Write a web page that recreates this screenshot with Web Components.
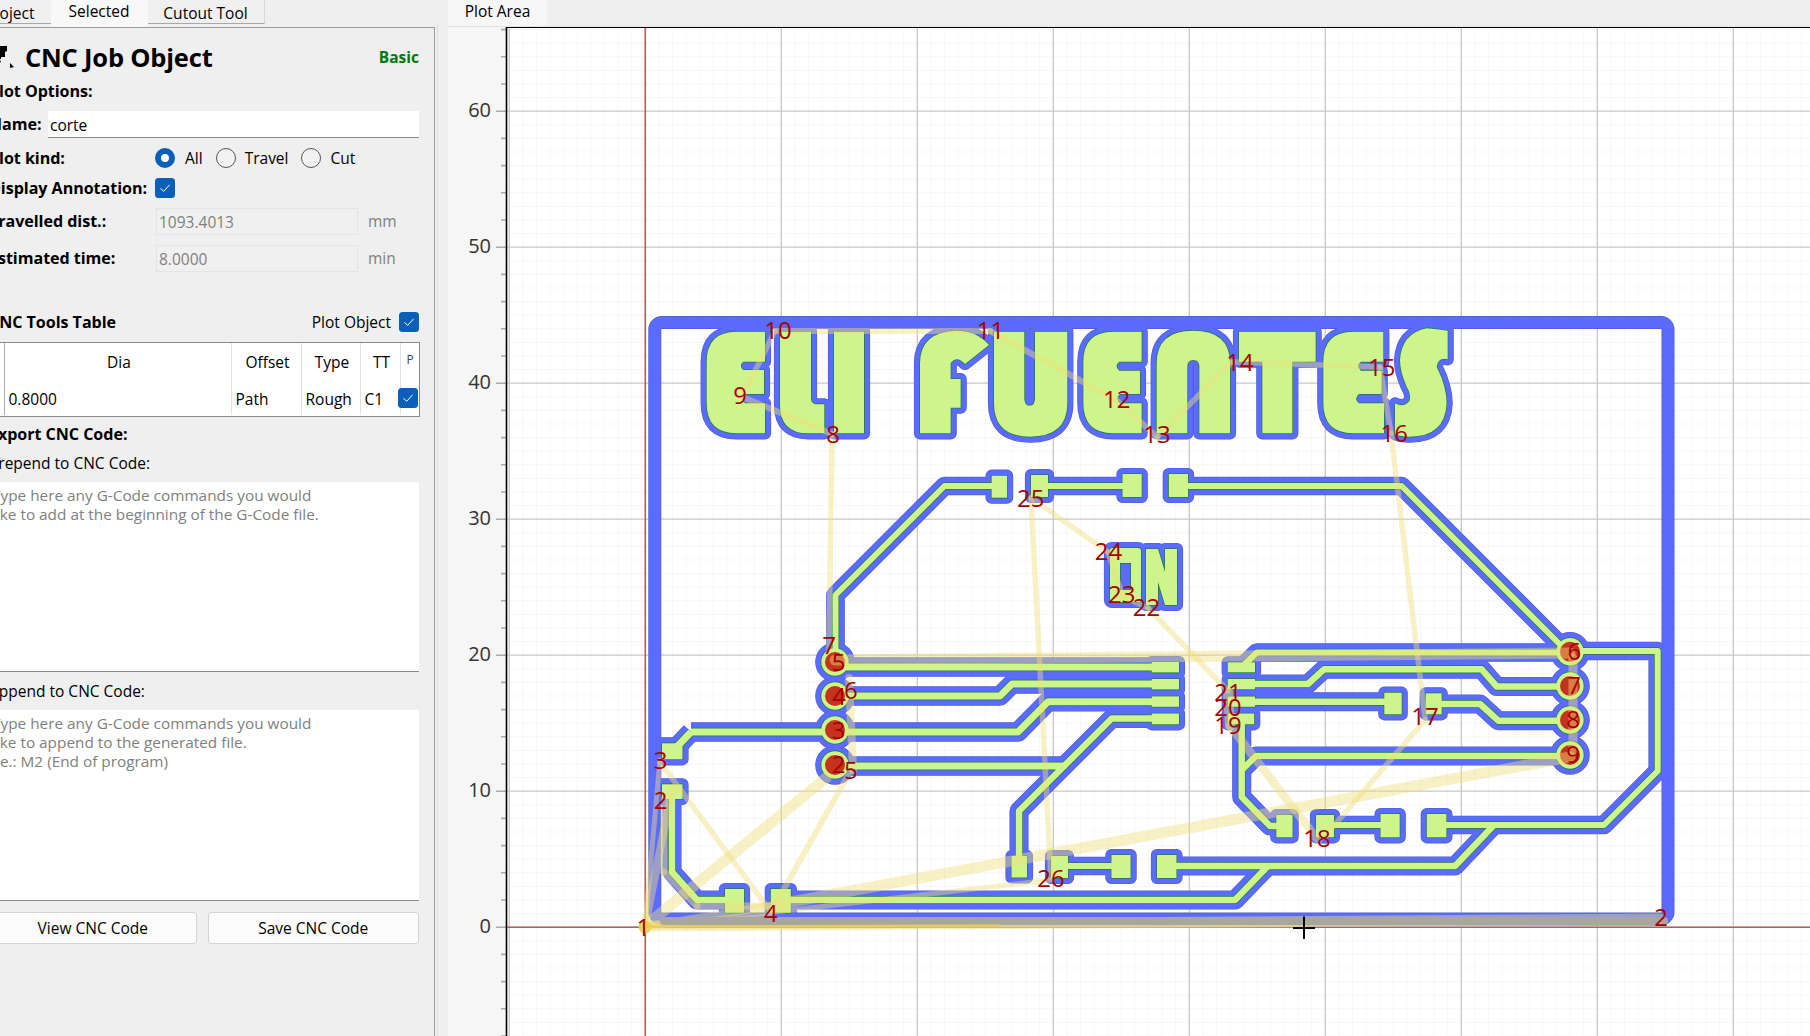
<!DOCTYPE html>
<html lang="en"><head><meta charset="utf-8"><title>CNC Job Object</title>
<style>html,body{margin:0;padding:0;height:100%;overflow:hidden;background:#efefef}body{font:16px 'Open Sans','Noto Sans',sans-serif;color:#000}</style>
</head><body>
<app-shell></app-shell>
<script>
const FONT="'Open Sans','Noto Sans',sans-serif";
class CncCheck extends HTMLElement{constructor(){super();this.attachShadow({mode:'open'}).innerHTML=`<style>:host{display:inline-block;width:20px;height:20px;flex:none}div{width:20px;height:20px;border-radius:3.5px;background:#0a5fb8}svg{display:block}</style><div><svg width="20" height="20" viewBox="0 0 20 20"><path d="M5.5 10.2 8.6 13.4 14.6 6.8" fill="none" stroke="#fff" stroke-width="1"/></svg></div>`}}
customElements.define('cnc-check',CncCheck);
class CncRadio extends HTMLElement{constructor(){super();const on=this.hasAttribute('checked');this.attachShadow({mode:'open'}).innerHTML=`<style>:host{display:inline-flex;align-items:center;gap:${on?10:9}px;flex:none}i{display:block;box-sizing:border-box;width:20px;height:20px;border-radius:50%;${on?'border:6px solid #0a5fb8;background:#fff':'border:1px solid #555;background:#f2f2f2'}}</style><i></i><span><slot></slot></span>`}}
customElements.define('cnc-radio',CncRadio);
class TabBar extends HTMLElement{constructor(){super();this.attachShadow({mode:'open'}).innerHTML=`<style>
:host{display:flex;height:27px;box-sizing:border-box;margin-left:-10px;font-size:15.5px;align-items:stretch}
div{box-sizing:border-box;height:24px;border-bottom:1px solid #a8a8a8;padding-top:2px;text-align:center;background:#f0f0f0;white-space:nowrap}
.a{height:27px;background:#f8f8f8;border:0;padding-top:0;line-height:22px;width:97px}
.p{width:60.5px;text-align:right;padding-right:16px;line-height:22px;direction:rtl;overflow:hidden}.c{width:117px;line-height:22px;border-right:1px solid #d8d8d8}</style>
<div class="p"><bdi>Project</bdi></div><div class="a">Selected</div><div class="c">Cutout Tool</div>`}}
customElements.define('tab-bar',TabBar);
class ToolsTable extends HTMLElement{constructor(){super();this.attachShadow({mode:'open'}).innerHTML=`<style>
:host{display:grid;box-sizing:border-box;width:431px;height:75px;margin-top:8px;background:#fff;border:solid #8a8a8a;border-width:1.5px 1.5px 1.5px 0;
grid-template-columns:16px 227px 70px 59px 40px 1fr;grid-template-rows:37px 35px;font-size:15.5px;flex:none}
div{border-right:1px solid #e2e2e2;display:flex;align-items:center;padding-left:3.5px;white-space:nowrap;overflow:hidden;box-sizing:border-box}
.h{justify-content:center;padding:1px 0 0 2px}.h.s{font-size:12px;color:#345;align-items:flex-start;padding:8px 0 0}
.i{border-right:1px solid #aaa}.l{border-right:0;position:relative;overflow:visible}cnc-check{position:absolute;left:-3px;top:8px}
.v{padding-top:3px}
</style>
<div class="i"></div><div class="h">Dia</div><div class="h">Offset</div><div class="h">Type</div><div class="h">TT</div><div class="h s l">P</div>
<div class="i"></div><div class="v">0.8000</div><div class="v">Path</div><div class="v">Rough</div><div class="v">C1</div><div class="l"><cnc-check></cnc-check></div>`}}
customElements.define('tools-table',ToolsTable);
class CncPanel extends HTMLElement{constructor(){super();this.attachShadow({mode:'open'}).innerHTML=`<style>
:host{display:flex;flex-direction:column;box-sizing:border-box;width:434.5px;height:1009px;margin-left:0;border-top:1.5px solid #9b9b9b;border-right:1.5px solid #9b9b9b;overflow:hidden;font-size:15.5px;padding-left:0}
.in{display:flex;flex-direction:column;margin-left:-11px;width:430px}
.r{display:flex;align-items:center;white-space:nowrap;flex:none}
b{font-weight:700;letter-spacing:-.05px;font-size:16.1px}
.head{height:38px;margin-top:9.5px;justify-content:space-between}
.head .t{display:flex;align-items:center;gap:12px;font-size:25.5px;font-weight:700;letter-spacing:-.2px}
.head .basic{color:#007a00;font-weight:700;font-size:15.5px}
.w{flex:none;display:block;margin-left:0}
input,.ta{font:inherit;box-sizing:border-box;outline:0;border:0}
.name{height:27px;margin-top:8px}.name b{width:59px;flex:none}
.name input{width:371px;height:27px;background:#fff;border-bottom:1.5px solid #8b8b8b;padding:3px 2px 0}
.lab{width:166px;flex:none}
.kind{height:24px;margin-top:8px}.kind cnc-radio+cnc-radio{margin-left:13px}
.ann{height:24px;margin-top:6px}
.val{height:27px}.val input{width:202px;height:27px;background:#f0f0f0;border:1px solid #e4e4e4;color:#808080;padding:1px 1px 0 2px;margin-right:10px}.val span{color:#808080}
.hd{height:24px;margin-top:38px;justify-content:space-between}.hd span{display:flex;align-items:center;gap:8px}
.pl{height:24px}
.ta{width:430px;height:190.5px;background:#fff;border-bottom:1.5px solid #8b8b8b;color:#808080;padding:4px 0 0 3px;line-height:19px;flex:none;white-space:pre;font-size:15.35px}
.btns{display:flex;gap:11.5px;margin-top:11px;height:32px;flex:none}
.btns div{box-sizing:border-box;background:#fbfbfb;border:1px solid #d4d4d4;border-radius:3px;display:flex;align-items:center;justify-content:center;height:32px}
.btns div:first-child{width:207.5px}.btns div:last-child{width:210.5px}
</style>
<div class="in">
<div class="r head"><span class="t"><svg class="w" width="26" height="24" viewBox="0 0 26 24" style="margin-right:-2px"><path d="M0 1h18v5l-2 1v5h-4v2H0zM0 17h8l3-2 1 2-6 3 3 1v2H0zM21 18l4 4-4 1z" fill="#000"/></svg>CNC Job Object</span><span class="basic">Basic</span></div>
<div class="r pl" style="margin-top:3px"><b>Plot Options:</b></div>
<div class="r name"><b>Name:</b><input value="corte" readonly></div>
<div class="r kind"><b class="lab">Plot kind:</b><cnc-radio checked>All</cnc-radio><cnc-radio>Travel</cnc-radio><cnc-radio>Cut</cnc-radio></div>
<div class="r ann"><b class="lab">Display Annotation:</b><cnc-check></cnc-check></div>
<div class="r val" style="margin-top:8px"><b class="lab" style="width:167px">Travelled dist.:</b><input value="1093.4013" readonly><span>mm</span></div>
<div class="r val" style="margin-top:10px"><b class="lab" style="width:167px">Estimated time:</b><input value="8.0000" readonly><span>min</span></div>
<div class="r hd"><b>CNC Tools Table</b><span>Plot Object<cnc-check></cnc-check></span></div>
<tools-table></tools-table>
<div class="r pl" style="margin-top:5px"><b>Export CNC Code:</b></div>
<div class="r pl" style="margin-top:5px">Prepend to CNC Code:</div>
<div class="ta" style="margin-top:7px">Type here any G-Code commands you would
like to add at the beginning of the G-Code file.</div>
<div class="r pl" style="margin-top:7px">Append to CNC Code:</div>
<div class="ta" style="margin-top:7px">Type here any G-Code commands you would
like to append to the generated file.
i.e.: M2 (End of program)</div>
<div class="btns"><div>View CNC Code</div><div>Save CNC Code</div></div>
</div>`}}
customElements.define('cnc-panel',CncPanel);
class CncSidebar extends HTMLElement{constructor(){super();this.attachShadow({mode:'open'}).innerHTML=`<style>:host{display:block;width:448px;height:1036px;flex:none;background:#efefef;overflow:hidden;position:relative}
.rule{width:1px;position:absolute;left:437px;top:24px;bottom:0;background:#dedede}</style><tab-bar></tab-bar><cnc-panel></cnc-panel><div class="rule"></div>`}}
customElements.define('cnc-sidebar',CncSidebar);

const NS='http://www.w3.org/2000/svg';
const Y0=927.2,X0=645.3;
const R=(x,y,w,h)=>({d:`M${x} ${y}L${x+w} ${y}L${x+w} ${y+h}L${x} ${y+h}Z`,c:1});
const T=(pts,w=6)=>({d:'M'+pts.map(p=>p.join(' ')).join('L'),w});
const C=(x,y,r)=>({d:`M${x-r} ${y}a${r} ${r} 0 1 0 ${2*r} 0a${r} ${r} 0 1 0 ${-2*r} 0Z`,c:1});
const Z=(ox,oy,d)=>({c:1,d:d.replace(/(-?[\d.]+) (-?[\d.]+)/g,(m,a,b)=>`${(ox+a/3).toFixed(2)} ${(oy+b/3).toFixed(2)}`)});
const shapes=[
 Z(690,315,'M225 50 L140 50 Q50 50 50 140 L50 265 Q50 355 140 355 L225 355 L225 265 L165 265 Q150 251 165 237 L222 237 L222 165 L160 165 Q145 152 160 140 L225 140 Z'),
 Z(690,315,'M270 50 L363 50 L363 250 Q363 268 382 268 L403 268 L403 355 L355 355 Q270 355 270 270 Z'),
 Z(690,315,'M432 50 L522 50 L522 355 L432 355 Z'),
 Z(690,315,'M690 355 L690 145 Q690 50 800 47 Q860 47 897 90 L825 147 Q800 120 782 145 L782 192 L812 192 L812 278 L782 278 L782 355 Z'),
 Z(690,315,'M912 50 L1003 50 L1003 250 Q1003 272 1019 272 Q1035 272 1035 250 L1035 50 L1132 50 L1132 265 Q1132 365 1020 365 Q912 365 912 265 Z'),
 Z(1060,315,'M245 50 L160 50 Q70 50 70 140 L70 265 Q70 355 160 355 L245 355 L245 265 L180 265 Q163 251 180 237 L240 237 L240 167 L178 167 Q161 153 178 140 L245 140 Z'),
 Z(1060,315,'M290 355 L290 145 Q290 47 400 47 Q510 47 510 145 L510 355 L418 355 L418 155 Q418 135 400 135 Q382 135 382 155 L382 355 Z'),
 Z(1060,315,'M537 50 L767 50 L767 140 L697 140 L697 355 L607 355 L607 140 L537 140 Z'),
 Z(1060,315,'M970 50 L880 50 Q790 50 790 140 L790 265 Q790 355 880 355 L972 355 L972 265 L897 265 Q880 251 897 237 L965 237 L965 167 L903 167 Q886 153 903 140 L970 140 Z'),
 Z(1060,315,'M1163 47 L1163 133 Q1135 125 1130 155 Q1160 215 1160 265 Q1155 365 1050 365 Q1020 365 1005 358 L1005 265 Q1030 280 1048 258 Q1055 240 1040 215 Q1020 170 1020 135 Q1025 55 1100 40 Q1130 42 1163 47 Z'),
 {c:1,d:'M1110 550Q1110 548 1112 548L1138 548Q1141 548 1141 551L1141 600Q1141 602 1138 602L1112 602Q1110 602 1110 600ZM1120 563L1120 590L1131 590L1131 563Z'},
 {c:1,d:'M1146 549L1158 549L1165 572L1165 549L1177 549L1177 605L1165 605L1158 582L1158 605L1146 605Z'},
 T([[835.5,667],[1160,667]],7),
 T([[835.5,696],[1000,696],[1012,684],[1160,684]],7),
 T([[691,732],[1018,732],[1048,701.7],[1160,701.7]],7),
 T([[672,752],[691,732]],7),
 T([[835.5,766],[1064,766]],7),
 T([[1152,718.5],[1111.7,718.5],[1019,811],[1019,860]],6.5),
 T([[835.5,650],[835.5,595],[944.5,486],[995,486]]),
 T([[1040,486],[1125,486]]),
 T([[1180,486],[1401.7,486],[1567,651.5]]),
 T([[1570,652.5],[1256.7,652.5],[1243,666]]),
 T([[1250,684],[1308,684],[1324,669.3],[1481.7,669.3],[1496.7,686.5],[1570,686.5]],6.5),
 T([[1250,701.7],[1386,701.7]],6.5),
 T([[1438,704],[1480,704],[1498.3,720.7],[1570,720.7]],6.5),
 T([[1241.7,720],[1241.7,797],[1270,826],[1282,826]],6.5),
 T([[1570,756],[1256,756],[1241.7,770]],6.5),
 T([[1570,651],[1657.7,651],[1657.7,771],[1604,825],[1442,825]]),
 T([[1494,825],[1455,866],[1170,866]],6.5),
 T([[785,900],[1235,900],[1268,866]],6.5),
 T([[672,795],[672,872],[697,900],[730,900]],6.5),
 T([[1325,825],[1385,825]],6),
 T([[1060,866],[1115,866]],6),
 R(1151.7,662,27.3,10.4),R(1151.7,679,27.3,10.4),R(1151.7,696.4,27.3,10.4),R(1151.7,713.5,27.3,10.8),
 R(1227.7,662.3,27.3,10),R(1227.7,679,27.3,10.3),R(1227.7,696.5,27.3,10.3),R(1227.7,713.5,26.5,10.8),
 R(662,743.3,20.5,16),R(662,784.3,20.5,14.7),R(725,889,19,23.7),R(770.8,889,20,23.7),
 R(1011.5,856,15.5,21.5),R(1051,856,17,22),R(1111.4,855,19.2,23),R(1157,855,19.5,23),
 R(991.6,475.7,15.5,22),R(1031,475,17,22),R(1122.5,474,19.2,23),R(1168.8,474,19.2,23),
 R(1384.3,692.7,17.4,21.6),R(1425.7,693.3,16,21),R(1276.3,815,16.3,22.3),R(1316,815,18,22.3),R(1380.5,814,19.2,23.3),R(1426.8,814,19.6,23.3),
 ...[[835,662],[835,696],[835,730],[835,765],[1570,651.7],[1570,686],[1570,720],[1570,755]].map(p=>C(p[0],p[1],13.7)),
];
const holes=[[835,662],[835,696],[835,730],[835,765],[1570,651.7],[1570,686],[1570,720],[1570,755]];
const travel=[
 [645,926,1660,919,11],[645,927,1300,925,5],
 [645,926,672,790,8],[645,926,660,760,5],[660,762,771,912,5.5],[645,926,826,778,11],[850,772,772,910,6],
 [645,927,1051,880,5],[645,927,775,905,8],[775,905,1570,757,11],[645,926,770,916,5],
 [1031,498,1051,878,5.5],[1031,498,1108,552,5.5],[1108,552,1122,594,5.5],[1122,596,1148,608,5.5],[1148,608,1228,691,5.5],
 [1230,726,1318,840,8.5],[1325,836,1425,720,5.5],[1425,718,1391,433,5.5],[1391,433,1380,367,5.5],[1380,367,1232,362,5.5],[1232,362,1157,437,5.5],
 [1157,437,1116,400,6],[1116,400,990,331,6],[990,331,775,331,6],[775,331,742,397,5.5],[742,397,832,434,6],[832,434,829,650,5.5],
 [835,660,1570,653,11],[849,678,853,770,8],[1573,658,1573,752,9],[1228,692,1230,726,10],
 [664,800,664,872,7],[664,872,697,906,7],[697,906,770,906,7],
];
const labels=[['1',643.4,926.5],['2',660.6,799.5],['3',660.6,759.5],['4',770.8,912.5],['5',838.6,661.5],['4',839,695.5],['3',838.6,729.5],['2',838.6,763.5],['7',829,644.5],['6',850.8,689.5],['5',850.8,769.5],['26',1051,877.5],
['8',833,433.5],['9',740,394.5],['10',778,329.5],['11',990.5,329.5],['12',1116.8,398.5],['13',1157,433.5],['14',1240,361.5],['15',1381.7,366.5],['16',1394.3,432.5],['25',1030.7,497.5],['24',1108.4,550.5],['23',1121.8,593.5],['22',1146.6,606.5],
['21',1228,691.5],['20',1228,706.5],['19',1228,724.5],['17',1425,715.5],['6',1574.3,650.5],['7',1574,684.5],['8',1573,718.5],['9',1573,753.5],['18',1317,837.5],['2',1661,916.5]];
function el(n,a,p){const e=document.createElementNS(NS,n);for(const k in a)e.setAttribute(k,a[k]);if(p)p.appendChild(e);return e}
class PcbView extends HTMLElement{constructor(){super();const s=this.attachShadow({mode:'open'});
 s.innerHTML=`<style>:host{display:block;width:1362px;height:1009px;flex:none}svg{display:block;font-family:${FONT}}</style>`;
 const v=el('svg',{width:1362,height:1009,viewBox:'448 27 1362 1009'},s);
 el('rect',{x:448,y:27,width:58,height:1009,fill:'#f6f6f6'},v);
 el('rect',{x:506,y:27,width:1304,height:1009,fill:'#fff'},v);
 let d='';for(let i=-10;i<=85;i++){const x=X0+i*13.6;if(x>507&&i%10)d+=`M${x} 28V1036`}
 for(let i=-8;i<=66;i++){const y=Y0-i*13.6;if(y>28&&i%10)d+=`M507 ${y}H1810`}
 el('path',{d,stroke:'#f7f7f7','stroke-width':1,fill:'none'},v);
 d='';for(let i=-1;i<=8;i++)d+=`M${X0+i*136} 28V1036`;for(let i=0;i<=6;i++)d+=`M507 ${Y0-i*136}H1810`;
 el('path',{d,stroke:'#c8c8c8','stroke-width':1.3,fill:'none'},v);
 d='';for(let i=-4;i<=33;i++){const y=Y0-i*27.2;if(y>28&&i%5)d+=`M501 ${y}H506`}
 el('path',{d,stroke:'#aaa','stroke-width':1.6,fill:'none'},v);
 d='';for(let i=-1;i<=6;i++)d+=`M496 ${Y0-i*136}H506`;
 el('path',{d,stroke:'#aaa','stroke-width':1.6,fill:'none'},v);
 for(let i=0;i<=6;i++){const t=el('text',{x:491,y:Y0-i*136-2,'text-anchor':'end','dominant-baseline':'central','font-size':20,fill:'#333'},v);t.textContent=i*10}
 el('path',{d:'M506.5 27V1036M506 27.3H1810',stroke:'#000','stroke-width':1.6,fill:'none'},v);
 el('path',{d:`M${X0} 28V1036M507 ${Y0}H1810`,stroke:'#b85c5c','stroke-width':1.6,fill:'none'},v);
 const layer=(fn)=>{const g=el('g',{'stroke-linejoin':'round','stroke-linecap':'butt'},v);shapes.forEach(x=>{const a=fn(x);a.d=x.d;el('path',a,g)});return g};
 const board=(col,w)=>el('rect',{x:654.8,y:322.5,width:1013.2,height:596.5,rx:7,fill:'none',stroke:col,'stroke-width':w},v);
 board('#4f5dcf',13);
 layer(x=>x.c?{fill:'#4f5dcf',stroke:'#4f5dcf','stroke-width':12.2}:{fill:'none',stroke:'#4f5dcf','stroke-width':x.w+12.6});
 board('#5b6bff',11.6);
 layer(x=>x.c?{fill:'#5b6bff',stroke:'#5b6bff','stroke-width':11}:{fill:'none',stroke:'#5b6bff','stroke-width':x.w+11.4});
 layer(x=>x.c?{fill:'none',stroke:'#1c7d48','stroke-width':1.5}:{fill:'none',stroke:'#1c7d48','stroke-width':x.w+1.4});
 layer(x=>x.c?{fill:'#cdf58c','fill-rule':'evenodd',stroke:'none'}:{fill:'none',stroke:'#cdf58c','stroke-width':x.w});
 holes.forEach(p=>el('circle',{cx:p[0],cy:p[1],r:10,fill:'#c5321e'},v));
 const g=el('g',{fill:'none','stroke-linecap':'round',stroke:'#efe07a','stroke-opacity':.44},v);
 travel.forEach(t=>el('line',{x1:t[0],y1:t[1],x2:t[2],y2:t[3],'stroke-width':t[4]},g));
 el('line',{x1:664,y1:921,x2:1664,y2:921,stroke:'#a7a79d','stroke-width':8,'stroke-linecap':'round'},v);
 el('line',{x1:645,y1:926.5,x2:1000,y2:925.5,stroke:'#e6c95a','stroke-width':2.5,'stroke-opacity':.8},v);
 el('circle',{cx:645,cy:927,r:6.5,fill:'#e9cf55',opacity:.85},v);
 labels.forEach(l=>{const t=el('text',{x:l[1],y:l[2],'text-anchor':'middle','dominant-baseline':'central','font-size':24,fill:'#a80000'},v);t.textContent=l[0]});
 el('path',{d:'M1304 916.5V939M1293 928H1315',stroke:'#000','stroke-width':2,fill:'none'},v);
}}
customElements.define('pcb-view',PcbView);
class PlotArea extends HTMLElement{constructor(){super();this.attachShadow({mode:'open'}).innerHTML=`<style>:host{display:flex;flex-direction:column;flex:1;min-width:0;height:1036px;background:#efefef}
.strip{height:27px;flex:none;display:flex;box-sizing:border-box;border-bottom:1px solid #e2e2e2}.tab{width:99px;height:26px;background:#f6f6f6;font-size:15.5px;line-height:22px;text-align:center}</style>
<div class="strip"><div class="tab">Plot Area</div></div><pcb-view></pcb-view>`}}
customElements.define('plot-area',PlotArea);
class AppShell extends HTMLElement{constructor(){super();this.attachShadow({mode:'open'}).innerHTML=`<style>:host{display:flex;width:1810px;height:1036px;overflow:hidden;font-family:${FONT}}</style><cnc-sidebar></cnc-sidebar><plot-area></plot-area>`}}
customElements.define('app-shell',AppShell);
</script>
</body></html>
